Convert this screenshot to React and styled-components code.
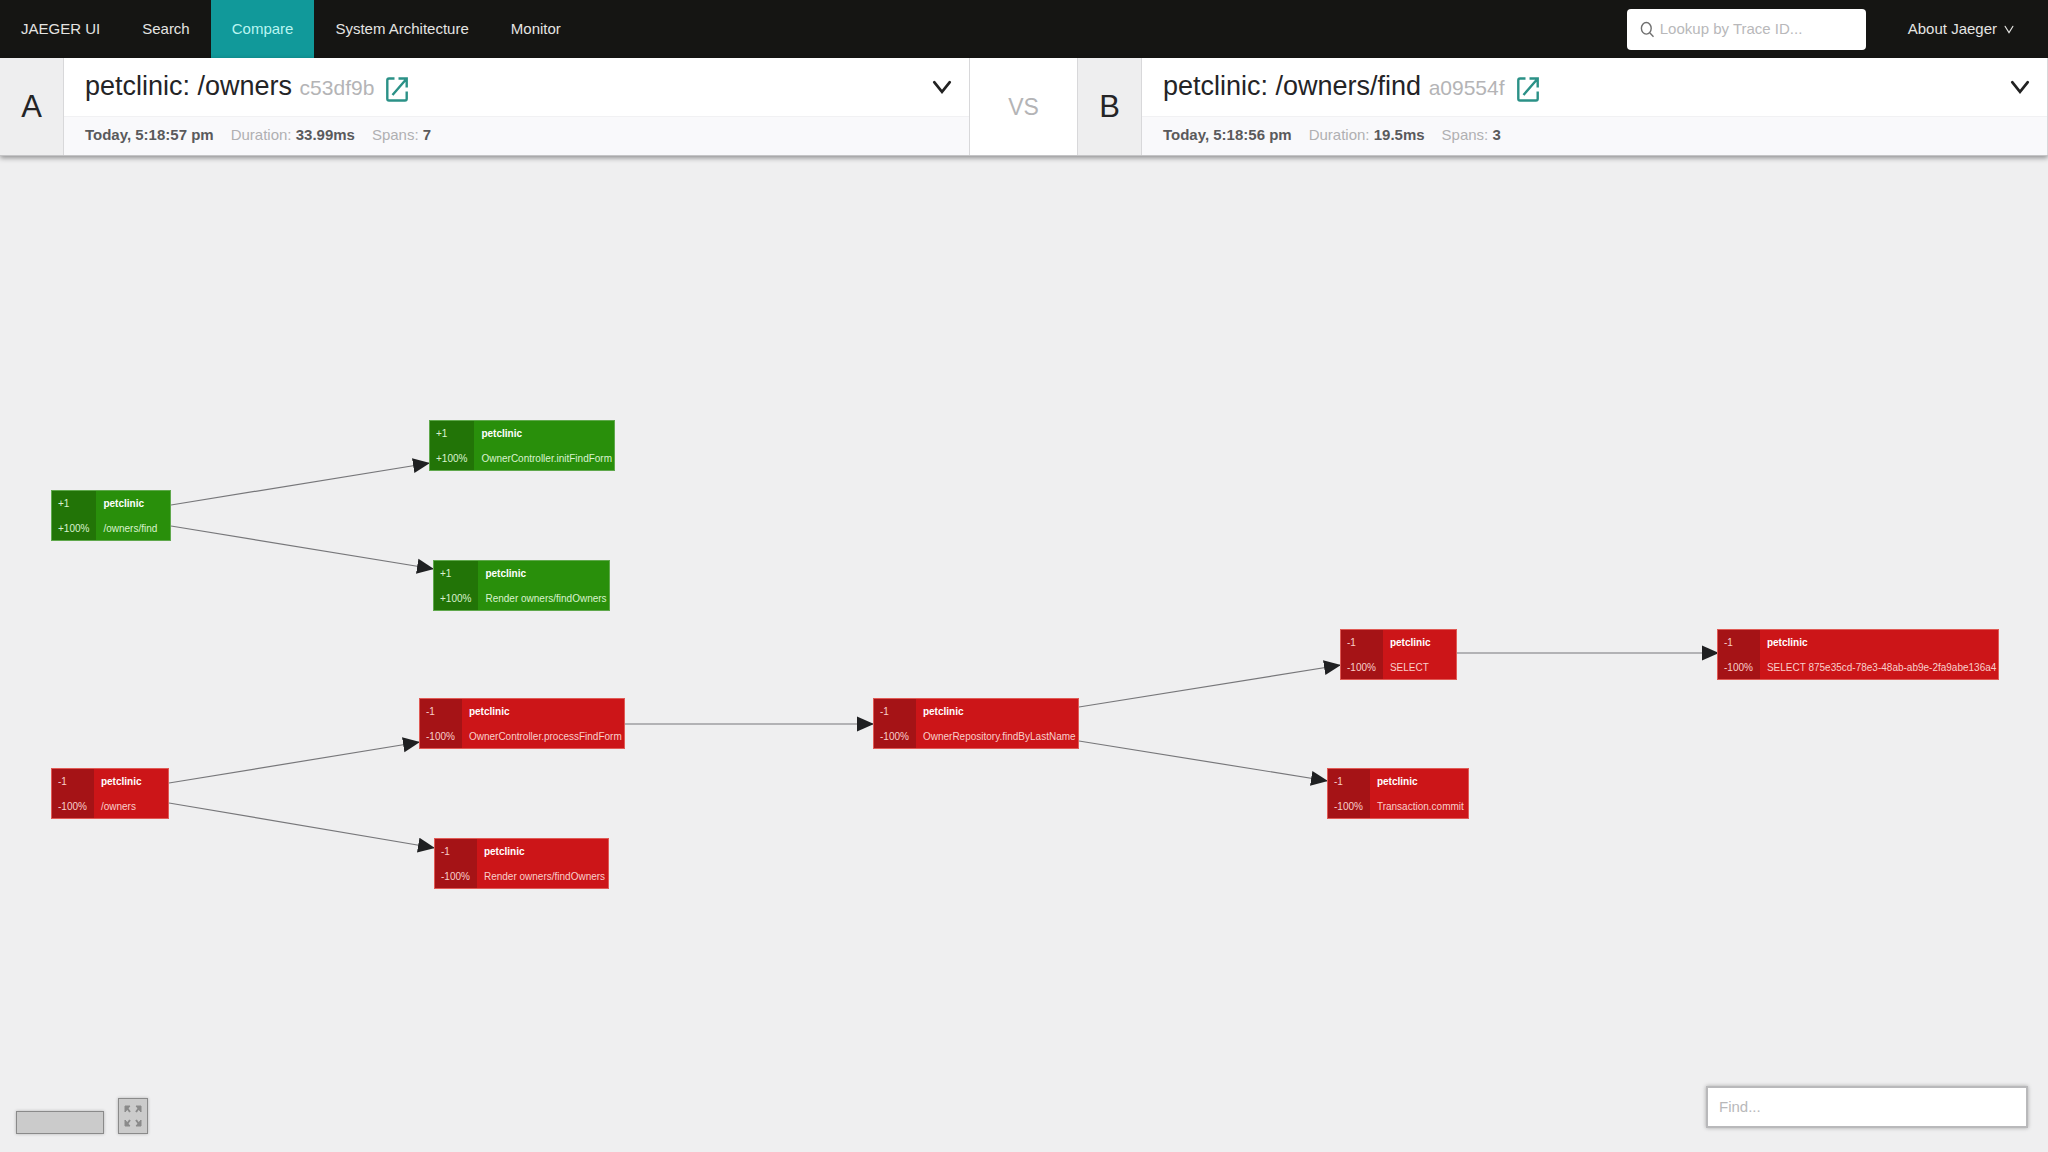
import React from 'react';
import styled, { createGlobalStyle } from 'styled-components';

const GlobalStyle = createGlobalStyle`
  *, *::before, *::after { box-sizing: border-box; }
  body {
    margin: 0;
    background: #efeff0;
    color: #242426;
    font-family: "Liberation Sans", Arial, sans-serif;
    font-size: 15px;
    line-height: 24px;
  }
  button, input { font: inherit; }
`;

const Page = styled.div`
  display: flex;
  flex-direction: column;
  min-height: 100vh;
`;

const NavBar = styled.nav`
  display: flex;
  align-items: center;
  height: 58px;
  background: #151513;
`;

const NavLink = styled.a`
  display: flex;
  align-items: center;
  height: 100%;
  padding: 0 21px;
  color: ${(p) => (p.$active ? '#b9f5f1' : '#e4e4e2')};
  background: ${(p) => (p.$active ? '#11999a' : 'transparent')};
  text-decoration: none;
`;

const Lookup = styled.label`
  display: flex;
  align-items: center;
  gap: 5px;
  width: 239px;
  height: 41px;
  margin-left: auto;
  padding: 0 13px;
  background: #fff;
  border-radius: 4px;
`;

const TextInput = styled.input`
  flex: 1;
  min-width: 0;
  padding: 0;
  border: 0;
  outline: 0;
  background: transparent;
  color: #333;
  &::placeholder { color: #b8b8ba; opacity: 1; }
`;

const AboutButton = styled.button`
  display: flex;
  align-items: center;
  gap: 7px;
  margin: 0 34px 0 42px;
  padding: 0;
  border: 0;
  background: transparent;
  color: #e4e4e2;
`;

const DiffHeader = styled.header`
  display: flex;
  position: relative;
  height: 98px;
  background: #fff;
  border-bottom: 1px solid #c4c4c6;
  box-shadow: 0 2px 5px rgba(0, 0, 0, 0.4);
`;

const TraceSide = styled.section`
  display: flex;
  flex: 1;
  min-width: 0;
  border-right: 1px solid #d8d8da;
`;

const Letter = styled.div`
  display: flex;
  align-items: center;
  justify-content: center;
  width: 64px;
  background: #eeeeef;
  border-right: 1px solid #d8d8da;
  font-size: 31px;
`;

const TraceInfo = styled.div`
  display: flex;
  flex: 1;
  flex-direction: column;
`;

const TitleRow = styled.div`
  display: flex;
  align-items: center;
  height: 58px;
  padding: 0 17px 0 21px;
`;

const Title = styled.h1`
  margin: 0;
  font-size: 27px;
  font-weight: 400;
  line-height: 40px;
`;

const TraceId = styled.small`
  color: #b4b4b6;
  font-size: 21px;
`;

const TraceLink = styled.a`
  display: flex;
  margin-left: 12px;
  padding-top: 4px;
  color: #2b9187;
`;

const Expander = styled.button`
  display: flex;
  margin-left: auto;
  padding: 0;
  border: 0;
  background: transparent;
  color: #222;
`;

const StatsRow = styled.div`
  display: flex;
  flex: 1;
  align-items: center;
  gap: 17px;
  padding: 0 21px 2px;
  border-top: 1px solid #f1f1f3;
  background: #f9f9fb;
  color: #b0b0b2;
`;

const Strong = styled.strong`
  color: #5a5a5c;
`;

const Versus = styled.div`
  display: flex;
  align-items: center;
  justify-content: center;
  width: 108px;
  border-right: 1px solid #d8d8da;
  color: #b4b4b6;
  font-size: 23px;
`;

const Canvas = styled.main`
  position: relative;
  flex: 1;
  overflow: hidden;
`;

const Edges = styled.svg`
  position: absolute;
  inset: 0;
  width: 100%;
  height: 100%;
`;

const palette = {
  added: { main: '#298f0b', dark: '#227407', edge: '#5fa84c', text: '#d9f2cf' },
  removed: { main: '#cc1518', dark: '#a51316', edge: '#e05a55', text: '#f8cfcb' },
};

const NodeBox = styled.article`
  position: absolute;
  left: ${(p) => p.$x}px;
  top: ${(p) => p.$y}px;
  display: flex;
  width: ${(p) => p.$w}px;
  height: 51px;
  border: 1px solid ${(p) => palette[p.$kind].edge};
  background: ${(p) => palette[p.$kind].main};
  color: ${(p) => palette[p.$kind].text};
  font-size: 10px;
  line-height: 25px;
  white-space: nowrap;
`;

const Metrics = styled.div`
  padding: 0 7px 0 6px;
  background: ${(p) => palette[p.$kind].dark};
`;

const Labels = styled.div`
  padding-left: 7px;
`;

const Service = styled.strong`
  display: block;
  color: #fff;
`;

const MiniMap = styled.div`
  display: flex;
  position: absolute;
  left: 16px;
  bottom: 18px;
  align-items: flex-end;
  gap: 14px;
`;

const MapView = styled.div`
  width: 88px;
  height: 23px;
  border: 1px solid #8a8a8a;
  background: #cbcbcb;
  box-shadow: 0 0 3px rgba(0, 0, 0, 0.25);
`;

const FitButton = styled.button`
  display: flex;
  align-items: center;
  justify-content: center;
  width: 30px;
  height: 36px;
  padding: 0;
  border: 1px solid #8a8a8a;
  background: #cbcbcb;
  box-shadow: 0 0 3px rgba(0, 0, 0, 0.25);
  color: #8a8a8a;
`;

const FindBox = styled.label`
  display: flex;
  position: absolute;
  right: 20px;
  bottom: 24px;
  width: 322px;
  height: 42px;
  padding: 0 11px;
  border: 2px solid #b9b9bb;
  background: #fff;
  box-shadow: 0 0 4px rgba(0, 0, 0, 0.3);
`;

const nodes = [
  { kind: 'added', x: 51, y: 334, w: 120, op: '/owners/find' },
  { kind: 'added', x: 429, y: 264, w: 186, op: 'OwnerController.initFindForm' },
  { kind: 'added', x: 433, y: 404, w: 177, op: 'Render owners/findOwners' },
  { kind: 'removed', x: 51, y: 612, w: 118, op: '/owners' },
  { kind: 'removed', x: 419, y: 542, w: 206, op: 'OwnerController.processFindForm' },
  { kind: 'removed', x: 434, y: 682, w: 175, op: 'Render owners/findOwners' },
  { kind: 'removed', x: 873, y: 542, w: 206, op: 'OwnerRepository.findByLastName' },
  { kind: 'removed', x: 1340, y: 473, w: 117, op: 'SELECT' },
  { kind: 'removed', x: 1327, y: 612, w: 142, op: 'Transaction.commit' },
  { kind: 'removed', x: 1717, y: 473, w: 282, op: 'SELECT 875e35cd-78e3-48ab-ab9e-2fa9abe136a4' },
];

const edges = [
  [171, 349, 430, 307],
  [171, 370, 434, 413],
  [169, 627, 420, 586],
  [169, 647, 435, 692],
  [625, 568, 874, 568],
  [1079, 551, 1341, 509],
  [1079, 585, 1328, 625],
  [1457, 497, 1719, 497],
];

function Chevron({ width, height, stroke }) {
  return (
    <svg width={width} height={height} viewBox="0 0 18 13" preserveAspectRatio="none" fill="none" stroke="currentColor" strokeWidth={stroke} strokeLinecap="round" aria-hidden="true">
      <path d="M2 2 9 11 16 2" />
    </svg>
  );
}

function Trace({ letter, name, id, time, duration, spans }) {
  return (
    <TraceSide>
      <Letter>{letter}</Letter>
      <TraceInfo>
        <TitleRow>
          <Title>
            {name} <TraceId>{id}</TraceId>
          </Title>
          <TraceLink href="#trace" aria-label={`Open trace ${id}`}>
            <svg width="22" height="25" viewBox="0 0 22 25" fill="none" stroke="currentColor" strokeWidth="2.4" aria-hidden="true">
              <path d="M8.5 1.5H3Q1.3 1.5 1.3 3.2V21.8Q1.3 23.5 3 23.5H19Q20.7 23.5 20.7 21.8V14.5M6.5 18 19.5 3M12.5 1.5H20.7V10.5" />
            </svg>
          </TraceLink>
          <Expander type="button" aria-label={`Choose trace ${letter}`}>
            <Chevron width={20} height={14} stroke={2.4} />
          </Expander>
        </TitleRow>
        <StatsRow>
          <Strong>{time}</Strong>
          <span>Duration: <Strong>{duration}</Strong></span>
          <span>Spans: <Strong>{spans}</Strong></span>
        </StatsRow>
      </TraceInfo>
    </TraceSide>
  );
}

function Node({ kind, x, y, w, op }) {
  const sign = kind === 'added' ? '+' : '-';
  return (
    <NodeBox $kind={kind} $x={x} $y={y} $w={w}>
      <Metrics $kind={kind}>
        <div>{sign}1</div>
        <div>{sign}100%</div>
      </Metrics>
      <Labels>
        <Service>petclinic</Service>
        <div>{op}</div>
      </Labels>
    </NodeBox>
  );
}

export default function App() {
  return (
    <Page>
      <GlobalStyle />
      <NavBar>
        <NavLink href="#home">JAEGER UI</NavLink>
        <NavLink href="#search">Search</NavLink>
        <NavLink href="#compare" $active>Compare</NavLink>
        <NavLink href="#architecture">System Architecture</NavLink>
        <NavLink href="#monitor">Monitor</NavLink>
        <Lookup>
          <svg width="15" height="17" viewBox="0 0 15 17" fill="none" stroke="#6f6f6f" strokeWidth="1.4" aria-hidden="true">
            <ellipse cx="6.3" cy="7.3" rx="4.9" ry="5.8" />
            <path d="M9.700 11.700 13.500 15.800" />
          </svg>
          <TextInput type="text" placeholder="Lookup by Trace ID..." aria-label="Lookup by Trace ID" />
        </Lookup>
        <AboutButton type="button">
          About Jaeger
          <Chevron width={10} height={9} stroke={2} />
        </AboutButton>
      </NavBar>
      <DiffHeader>
        <Trace letter="A" name="petclinic: /owners" id="c53df9b" time="Today, 5:18:57 pm" duration="33.99ms" spans="7" />
        <Versus>VS</Versus>
        <Trace letter="B" name="petclinic: /owners/find" id="a09554f" time="Today, 5:18:56 pm" duration="19.5ms" spans="3" />
      </DiffHeader>
      <Canvas>
        <Edges aria-hidden="true">
          <defs>
            <marker id="arrow" markerUnits="userSpaceOnUse" markerWidth="18" markerHeight="16" refX="17" refY="8" orient="auto">
              <path d="M0 0.500 17 8 0 15.500Z" fill="#1f2022" />
            </marker>
          </defs>
          {edges.map(([x1, y1, x2, y2]) => (
            <line key={`${x1}-${y1}`} x1={x1} y1={y1} x2={x2} y2={y2} stroke="#77777a" strokeWidth="1.2" markerEnd="url(#arrow)" />
          ))}
        </Edges>
        {nodes.map((n) => (
          <Node key={`${n.x}-${n.y}`} {...n} />
        ))}
        <MiniMap>
          <MapView />
          <FitButton type="button" aria-label="Fit to view">
            <svg width="18" height="22" viewBox="0 0 18 22" fill="currentColor" stroke="currentColor" aria-hidden="true">
              <path d="M1 1H6L1 7ZM17 1H12L17 7ZM1 21H6L1 15ZM17 21H12L17 15Z" strokeWidth="1" />
              <path d="M3 3 6 7M15 3 12 7M3 19 6 15M15 19 12 15" strokeWidth="2" />
            </svg>
          </FitButton>
        </MiniMap>
        <FindBox>
          <TextInput type="text" placeholder="Find..." aria-label="Find" />
        </FindBox>
      </Canvas>
    </Page>
  );
}
